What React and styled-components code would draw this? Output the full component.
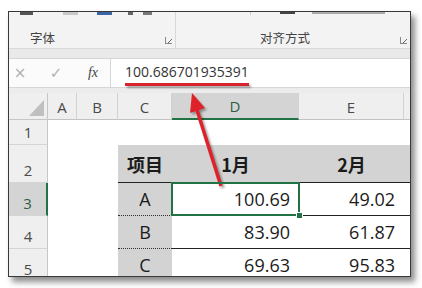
import React from "react"
import styled, { createGlobalStyle, css } from "styled-components"

const GlobalStyle = createGlobalStyle`
  html, body {
    margin: 0;
    padding: 0;
    background: #fff;
  }
`

const green = "#217346"

const App = () => {
  return (
    <Page>
      <GlobalStyle />
      <Frame>
        <Ribbon>
          <Group $width={167}>
            <IconRow>
              <Stub $ml={11} $w={13} $color="#555" />
              <Stub $ml={30} $w={15} $color="#c9c9c9" />
              <Stub $ml={19} $w={15} $color="#3b63a6" />
              <Stub $ml={16} $w={5} $color="#666" />
              <Stub $ml={10} $w={9} $color="#777" />
            </IconRow>
            <GroupFooter $pl={21}>
              <GroupLabel>字体</GroupLabel>
              <Launcher />
            </GroupFooter>
          </Group>
          <Group>
            <IconRow>
              <Stub $ml={74} $w={1} $color="#ccc" />
              <Stub $ml={29} $w={15} $color="#444" $h={2} />
              <Stub $ml={17} $w={73} $color="#aaa" $h={2} />
            </IconRow>
            <GroupFooter $pl={84}>
              <GroupLabel>对齐方式</GroupLabel>
              <Launcher />
            </GroupFooter>
          </Group>
        </Ribbon>
        <Band />
        <FormulaBar>
          <FxTools>
            <Tool>×</Tool>
            <Tool>✓</Tool>
            <Fx>fx</Fx>
          </FxTools>
          <FormulaInput>100.686701935391</FormulaInput>
        </FormulaBar>
        <Gap />
        <Sheet>
          <Corner>
            <SelectAll />
          </Corner>
          <ColHeader>A</ColHeader>
          <ColHeader>B</ColHeader>
          <ColHeader>C</ColHeader>
          <ColHeader $active>D</ColHeader>
          <ColHeader>E</ColHeader>
          <ColHeader />

          <RowHeader>1</RowHeader>
          <Cell />
          <Cell />
          <Cell />
          <Cell />
          <Cell />
          <Cell />

          <RowHeader>2</RowHeader>
          <Cell />
          <Cell />
          <Cell $fill $bold $line="solid" $align="center">项目</Cell>
          <Cell $fill $bold $line="solid" $align="center">1月</Cell>
          <Cell $fill $bold $line="solid" $align="center">2月</Cell>
          <Cell $fill $line="solid" />

          <RowHeader $active>3</RowHeader>
          <Cell />
          <Cell />
          <Cell $fill $line="dotted" $align="center">A</Cell>
          <Cell $line="solid" $selected>100.69</Cell>
          <Cell $line="solid">49.02</Cell>
          <Cell $line="solid" />

          <RowHeader>4</RowHeader>
          <Cell />
          <Cell />
          <Cell $fill $line="dotted" $align="center">B</Cell>
          <Cell $line="solid">83.90</Cell>
          <Cell $line="solid">61.87</Cell>
          <Cell $line="solid" />

          <RowHeader>5</RowHeader>
          <Cell />
          <Cell />
          <Cell $fill $line="dotted" $align="center">C</Cell>
          <Cell $line="solid">69.63</Cell>
          <Cell $line="solid">95.83</Cell>
          <Cell $line="solid" />
        </Sheet>
      </Frame>

      <Annotation viewBox="0 0 422 288">
        <defs>
          <filter id="soft" x="-20%" y="-20%" width="140%" height="140%">
            <feGaussianBlur stdDeviation="1.2" />
          </filter>
        </defs>
        <g filter="url(#soft)" fill="rgba(0,0,0,0.35)" stroke="rgba(0,0,0,0.35)">
          <rect x="127" y="85" width="124" height="3" stroke="none" />
          <line x1="223" y1="188" x2="199" y2="112" strokeWidth="3.5" />
          <polygon points="194,96 207,110 192,115" stroke="none" />
        </g>
        <rect x="125" y="83" width="124" height="3" fill="#d7232b" />
        <line x1="221" y1="186" x2="197" y2="110" stroke="#df2229" strokeWidth="3.5" />
        <polygon points="192,93 205,108 190,113" fill="#df2229" />
      </Annotation>
    </Page>
  )
}

export default App

const Page = styled.div`
  position: relative;
  width: 422px;
  height: 288px;
  padding: 11px 0 0 8px;
  box-sizing: border-box;
  background: #fff;
`

const Frame = styled.div`
  width: 403px;
  height: 266px;
  box-sizing: border-box;
  border: 1px solid #383838;
  overflow: hidden;
  display: flex;
  flex-direction: column;
  background: #fff;
  box-shadow: 4px 5px 6px rgba(0, 0, 0, 0.45);
`

const Ribbon = styled.div`
  height: 36px;
  flex: none;
  display: flex;
  background: #f3f3f3;
`

const Group = styled.div`
  ${(p) =>
    p.$width
      ? css`
          width: ${p.$width}px;
          flex: none;
        `
      : css`
          flex: 1;
        `}
  box-sizing: border-box;
  border-right: 1px solid #d8d8d8;
  display: flex;
  flex-direction: column;
  justify-content: space-between;
  &:last-child {
    border-right: none;
  }
`

const IconRow = styled.div`
  display: flex;
  height: 4px;
  align-items: flex-start;
`

const Stub = styled.span`
  margin-left: ${(p) => p.$ml}px;
  width: ${(p) => p.$w}px;
  height: ${(p) => p.$h || 3}px;
  background: ${(p) => p.$color};
  flex: none;
`

const GroupFooter = styled.div`
  display: flex;
  align-items: flex-end;
  justify-content: space-between;
  padding: 0 3px 3px ${(p) => p.$pl}px;
`

const GroupLabel = styled.span`
  font-family: "Noto Sans CJK SC", sans-serif;
  font-size: 12.5px;
  line-height: 14px;
  color: #444;
`

const Launcher = styled.span`
  width: 6px;
  height: 6px;
  margin-bottom: 1px;
  border-left: 1px solid #888;
  border-bottom: 1px solid #888;
  position: relative;
  &::after {
    content: "";
    position: absolute;
    right: 0;
    bottom: 0;
    width: 4px;
    height: 4px;
    background: linear-gradient(135deg, transparent 45%, #666 45%, #666 60%, transparent 60%);
  }
`

const Band = styled.div`
  height: 10px;
  flex: none;
  box-sizing: border-box;
  background: #e9e9e9;
  border-top: 1px solid #d9d9d9;
`

const FormulaBar = styled.div`
  height: 30px;
  flex: none;
  box-sizing: border-box;
  display: flex;
  background: #fff;
  border-top: 1px solid #d6d6d6;
  border-bottom: 1px solid #d6d6d6;
`

const FxTools = styled.div`
  width: 102px;
  flex: none;
  box-sizing: border-box;
  border-right: 1px solid #d6d6d6;
  display: grid;
  grid-template-columns: 22px 50px 24px 1fr;
  align-items: center;
  background: #fbfbfb;
`

const Tool = styled.span`
  text-align: center;
  font-family: "DejaVu Sans", sans-serif;
  font-size: 15px;
  color: #b0b0b0;
`

const Fx = styled.span`
  text-align: center;
  font-family: "Liberation Serif", serif;
  font-style: italic;
  font-size: 14px;
  color: #444;
`

const FormulaInput = styled.div`
  flex: 1;
  display: flex;
  align-items: center;
  padding: 0 0 3px 14px;
  font-family: "Open Sans", sans-serif;
  font-size: 14px;
  color: #333;
`

const Gap = styled.div`
  height: 5px;
  flex: none;
  background: #ececec;
`

const Sheet = styled.div`
  display: grid;
  grid-template-columns: 39px 29px 41px 54px 127px 105px 1fr;
  grid-template-rows: 27px 25px 38px 33px 33px 33px;
  font-family: "Open Sans", sans-serif;
`

const headerBase = css`
  box-sizing: border-box;
  background: #efefef;
  display: flex;
  justify-content: center;
  align-items: flex-end;
  padding-bottom: 3px;
  font-size: 15px;
  line-height: 18px;
  color: #4a4a4a;
`

const Corner = styled.div`
  box-sizing: border-box;
  background: #efefef;
  border-right: 1px solid #c6c6c6;
  border-bottom: 1px solid #c6c6c6;
  display: flex;
  justify-content: flex-end;
  align-items: flex-end;
  padding: 0 3px 3px 0;
`

const SelectAll = styled.span`
  width: 0;
  height: 0;
  border-left: 15px solid transparent;
  border-bottom: 16px solid #bfbfbf;
`

const ColHeader = styled.div`
  ${headerBase};
  border-right: 1px solid #d2d2d2;
  border-bottom: 1px solid #c2c2c2;
  ${(p) =>
    p.$active &&
    css`
      background: #d4d4d4;
      border-bottom: 2px solid ${green};
      color: #2f5f42;
    `}
`

const RowHeader = styled.div`
  ${headerBase};
  border-right: 1px solid #c6c6c6;
  border-bottom: 1px solid #d4d4d4;
  ${(p) =>
    p.$active &&
    css`
      background: #d4d4d4;
      border-right: 2px solid ${green};
      color: #2f5f42;
    `}
`

const Cell = styled.div`
  position: relative;
  box-sizing: border-box;
  display: flex;
  align-items: center;
  justify-content: ${(p) => (p.$align === "center" ? "center" : "flex-end")};
  padding: 0 9px 0 4px;
  background: ${(p) => (p.$fill ? "#d3d3d3" : "#fff")};
  font-family: ${(p) =>
    p.$bold ? '"Noto Sans CJK SC", sans-serif' : '"Open Sans", sans-serif'};
  font-weight: ${(p) => (p.$bold ? 700 : 400)};
  font-size: 18px;
  color: #1b1b1b;
  border-bottom: ${(p) =>
    p.$line === "solid"
      ? "1px solid #222"
      : p.$line === "dotted"
      ? "1px dotted #333"
      : "none"};
  ${(p) =>
    p.$align === "center" &&
    css`
      padding: 0;
    `}
  ${(p) =>
    p.$selected &&
    css`
      &::after {
        content: "";
        position: absolute;
        inset: -1px -1px -1px -1px;
        border: 2px solid ${green};
        z-index: 1;
      }
      &::before {
        content: "";
        position: absolute;
        right: -4px;
        bottom: -4px;
        width: 5px;
        height: 5px;
        background: ${green};
        border: 1px solid #fff;
        z-index: 2;
      }
    `}
`

const Annotation = styled.svg`
  position: absolute;
  left: 0;
  top: 0;
  width: 422px;
  height: 288px;
  pointer-events: none;
`
